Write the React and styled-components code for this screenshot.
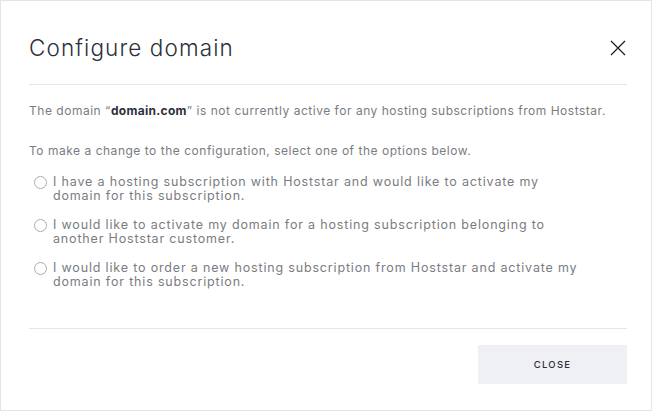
import React from "react";
import styled, { createGlobalStyle } from "styled-components";

const Global = createGlobalStyle`
  html, body { margin: 0; padding: 0; background: #ffffff; }
  body { font-family: Inter, "Open Sans", "Liberation Sans", sans-serif; }
  * { box-sizing: border-box; }
`;

const Modal = styled.div`
  width: 652px;
  height: 411px;
  border: 1px solid #e4e4e6;
  background: #fff;
  padding: 0 24px 0 28px;
  display: flex;
  flex-direction: column;
`;

const Header = styled.div`
  height: 84px;
  flex: none;
  display: flex;
  align-items: center;
  justify-content: space-between;
  padding-top: 10px;
  border-bottom: 1px solid #e6e6e8;
`;

const Title = styled.h1`
  margin: 0;
  font-family: Inter, "Open Sans", sans-serif;
  font-weight: 300;
  font-size: 22.5px;
  letter-spacing: 1.1px;
  color: #2c2f3a;
`;

const CloseIcon = styled.button`
  border: 0;
  background: none;
  padding: 0;
  width: 16px;
  height: 16px;
  margin-right: 1px;
  display: flex;
  cursor: pointer;
`;

const Body = styled.div`
  padding-top: 19px;
  flex: 1;
  border-bottom: 1px solid #e6e6e8;
`;

const Para = styled.p`
  margin: 0 0 ${(p) => p.$mb || 0}px;
  font-size: 12px;
  line-height: 14px;
  letter-spacing: 0.52px;
  color: #7a7c82;
  b { color: #2c2f3a; font-weight: 700; letter-spacing: 0.3px; }
`;

const Options = styled.div`
  display: flex;
  flex-direction: column;
  gap: 15px;
  padding-left: 5px;
  margin-top: 17px;
`;

const Option = styled.label`
  display: flex;
  align-items: flex-start;
  gap: 6px;
  font-size: 12.5px;
  line-height: 14px;
  letter-spacing: 0.83px;
  color: #7a7c82;
  cursor: pointer;
`;

const OptionText = styled.span`
  max-width: 528px;
`;

const Radio = styled.span`
  flex: none;
  width: 13px;
  height: 13px;
  border-radius: 50%;
  border: 1px solid #a9abb0;
  margin-top: 1px;
`;

const Footer = styled.div`
  height: 81px;
  flex: none;
  display: flex;
  justify-content: flex-end;
  align-items: flex-start;
  padding-top: 16px;
`;

const Button = styled.button`
  width: 149px;
  height: 39px;
  border: 0;
  background: #eff0f4;
  font-family: Inter, "Open Sans", sans-serif;
  font-size: 9.5px;
  font-weight: 500;
  letter-spacing: 1.3px;
  color: #2c2f3a;
  cursor: pointer;
`;

const options = [
  "I have a hosting subscription with Hoststar and would like to activate my domain for this subscription.",
  "I would like to activate my domain for a hosting subscription belonging to another Hoststar customer.",
  "I would like to order a new hosting subscription from Hoststar and activate my domain for this subscription.",
];

export default function App() {
  return (
    <>
      <Global />
      <Modal>
        <Header>
          <Title>Configure domain</Title>
          <CloseIcon aria-label="Close">
            <svg width="16" height="16" viewBox="0 0 16 16">
              <path d="M1 1L15 15M15 1L1 15" stroke="#1f2128" strokeWidth="1.3" fill="none" />
            </svg>
          </CloseIcon>
        </Header>
        <Body>
          <Para $mb={26}>
            The domain “<b>domain.com</b>” is not currently active for any hosting subscriptions from Hoststar.
          </Para>
          <Para>To make a change to the configuration, select one of the options below.</Para>
          <Options>
            {options.map((o) => (
              <Option key={o}>
                <Radio />
                <OptionText>{o}</OptionText>
              </Option>
            ))}
          </Options>
        </Body>
        <Footer>
          <Button>CLOSE</Button>
        </Footer>
      </Modal>
    </>
  );
}
